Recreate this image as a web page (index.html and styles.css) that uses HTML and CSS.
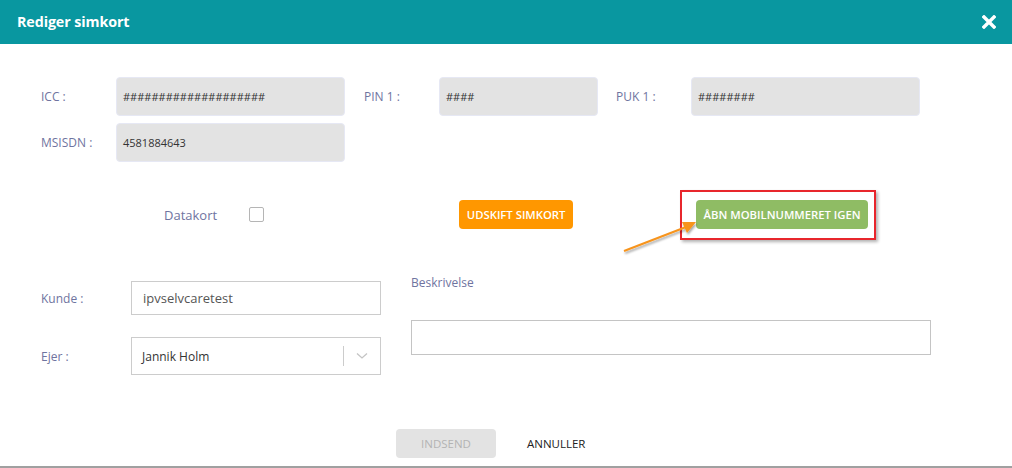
FILE: index.html
```html
<!DOCTYPE html>
<html lang="da">
<head>
<meta charset="utf-8">
<title>Rediger simkort</title>
<link rel="stylesheet" href="styles.css">
</head>
<body>
<div class="modal">
  <header class="modal-header">
    <h1 class="modal-title">Rediger simkort</h1>
    <button class="close-btn" aria-label="Luk">
      <svg width="14" height="14" viewBox="0 0 14 14"><path d="M2 2 L12 12 M12 2 L2 12" stroke="#fff" stroke-width="3.4" stroke-linecap="square"/></svg>
    </button>
  </header>

  <main class="modal-body">
    <div class="sim-grid">
      <div class="sim-row">
        <span class="lbl">ICC :</span>
        <div class="ro-field w229">####################</div>
        <span class="lbl lbl-mid">PIN 1 :</span>
        <div class="ro-field w159">####</div>
        <span class="lbl lbl-right">PUK 1 :</span>
        <div class="ro-field w229">########</div>
      </div>
      <div class="sim-row">
        <span class="lbl">MSISDN :</span>
        <div class="ro-field w229">4581884643</div>
      </div>
    </div>

    <div class="action-row">
      <span class="datakort">Datakort</span>
      <span class="checkbox"></span>
      <button class="btn btn-orange">UDSKIFT SIMKORT</button>
      <div class="highlight">
        <button class="btn btn-green">ÅBN MOBILNUMMERET IGEN</button>
      </div>
      <svg class="arrow" width="90" height="45" viewBox="0 0 90 45">
        <defs>
          <filter id="sh" x="-20%" y="-20%" width="160%" height="180%">
            <feDropShadow dx="1" dy="2" stdDeviation="1.2" flood-color="#000" flood-opacity="0.35"/>
          </filter>
        </defs>
        <g filter="url(#sh)">
          <line x1="4" y1="39" x2="66" y2="15" stroke="#f7941d" stroke-width="2"/>
          <polygon points="76,10 62,10 67,21" fill="#f7941d"/>
        </g>
      </svg>
    </div>

    <div class="lower">
      <div class="lower-left">
        <div class="form-row">
          <span class="lbl2">Kunde :</span>
          <div class="text-field">ipvselvcaretest</div>
        </div>
        <div class="form-row">
          <span class="lbl2">Ejer :</span>
          <div class="select-field">
            <span class="select-value">Jannik Holm</span>
            <span class="select-sep"></span>
            <svg class="chev" width="12" height="8" viewBox="0 0 12 8"><path d="M1 1.5 L6 6 L11 1.5" fill="none" stroke="#c4c4c4" stroke-width="1.3"/></svg>
          </div>
        </div>
      </div>
      <div class="lower-right">
        <span class="lbl3">Beskrivelse</span>
        <div class="textarea"></div>
      </div>
    </div>

    <div class="footer">
      <button class="btn btn-disabled">INDSEND</button>
      <button class="btn-link">ANNULLER</button>
    </div>
  </main>
</div>
</body>
</html>
```

FILE: styles.css
```css
* { box-sizing: border-box; }
html, body { margin: 0; padding: 0; }
body {
  font-family: "Open Sans", "Noto Sans", sans-serif;
  background: #fff;
  width: 1012px;
  height: 468px;
  overflow: hidden;
}
.modal {
  height: 468px;
  border-bottom: 2px solid #a0a0a0;
}
.modal-header {
  height: 44px;
  background: #0997a0;
  display: flex;
  align-items: center;
  justify-content: space-between;
  padding: 0 16px 0 17px;
}
.modal-title {
  margin: 0;
  color: #fff;
  font-size: 14.3px;
  font-weight: 700;
  letter-spacing: -0.1px;
  padding-bottom: 2px;
}
.close-btn {
  background: none;
  border: 0;
  padding: 0;
  width: 14px;
  height: 14px;
  display: block;
  margin-top: -1px;
}
.close-btn svg { display: block; }

.modal-body { padding-top: 33px; }

.sim-grid {
  display: flex;
  flex-direction: column;
  gap: 7px;
  padding-left: 41px;
}
.sim-row {
  display: flex;
  align-items: center;
  height: 39px;
}
.lbl {
  width: 75px;
  font-size: 12px;
  color: #6f74a0;
}
.lbl-mid { margin-left: 19px; }
.lbl-right { margin-left: 18px; }
.ro-field {
  height: 39px;
  background: #e3e3e3;
  border: 1px solid #e6e8f4;
  border-radius: 4px;
  font-size: 11px;
  color: #333;
  display: flex;
  align-items: center;
  padding-left: 6px;
}
.w229 { width: 229px; }
.w159 { width: 159px; }

.action-row {
  position: relative;
  margin-top: 27px;
  height: 51px;
  display: flex;
  align-items: center;
  padding-left: 164px;
}
.datakort {
  font-size: 13px;
  color: #6f74a0;
}
.checkbox {
  width: 15px;
  height: 15px;
  border: 1.5px solid #b5b5b5;
  border-radius: 2px;
  margin-left: 32px;
  margin-top: -1px;
}
.btn {
  font-family: inherit;
  border: 0;
  border-radius: 4px;
  color: #fff;
  font-size: 11.3px;
  font-weight: 600;
  height: 29px;
  padding: 0;
  cursor: pointer;
}
.btn-orange {
  background: #ff9700;
  width: 114px;
  margin-left: 195px;
}
.highlight {
  margin-left: 107px;
  border: 2px solid #e8262c;
  padding: 8px 6px 9px 14px;
  box-shadow: 2px 2px 3px rgba(0,0,0,0.3);
}
.btn-green {
  background: #8fbc64;
  width: 172px;
  display: block;
}
.arrow {
  position: absolute;
  left: 620px;
  top: 23px;
}

.lower {
  display: flex;
  margin-top: 36px;
}
.lower-left {
  padding-left: 41px;
  display: flex;
  flex-direction: column;
  gap: 22px;
  padding-top: 5px;
}
.form-row {
  display: flex;
  align-items: center;
}
.lbl2 {
  width: 90px;
  font-size: 12px;
  color: #6f74a0;
}
.text-field {
  width: 250px;
  height: 34px;
  border: 1px solid #ccc;
  font-size: 13px;
  color: #555;
  display: flex;
  align-items: center;
  padding-left: 11px;
}
.select-field {
  width: 250px;
  height: 38px;
  border: 1px solid #ccc;
  display: flex;
  align-items: center;
  padding-left: 10px;
}
.select-value {
  flex: 1;
  font-size: 12px;
  color: #333;
}
.select-sep {
  width: 1px;
  height: 20px;
  background: #ccc;
}
.chev {
  margin: 0 12px 0 12px;
}
.lower-right {
  margin-left: 30px;
  display: flex;
  flex-direction: column;
}
.lbl3 {
  font-size: 12px;
  color: #6f74a0;
  line-height: 13px;
}
.textarea {
  margin-top: 31px;
  width: 520px;
  height: 35px;
  border: 1px solid #c4c4c4;
}

.footer {
  display: flex;
  align-items: center;
  padding-left: 396px;
  margin-top: 54px;
}
.btn-disabled {
  background: #e3e3e3;
  color: #b3b3b3;
  width: 100px;
  font-size: 11.5px;
  font-weight: 400;
}
.btn-link {
  background: none;
  border: 0;
  padding: 0;
  margin-left: 31px;
  font-family: inherit;
  font-size: 11.5px;
  color: #222;
  cursor: pointer;
}
```
